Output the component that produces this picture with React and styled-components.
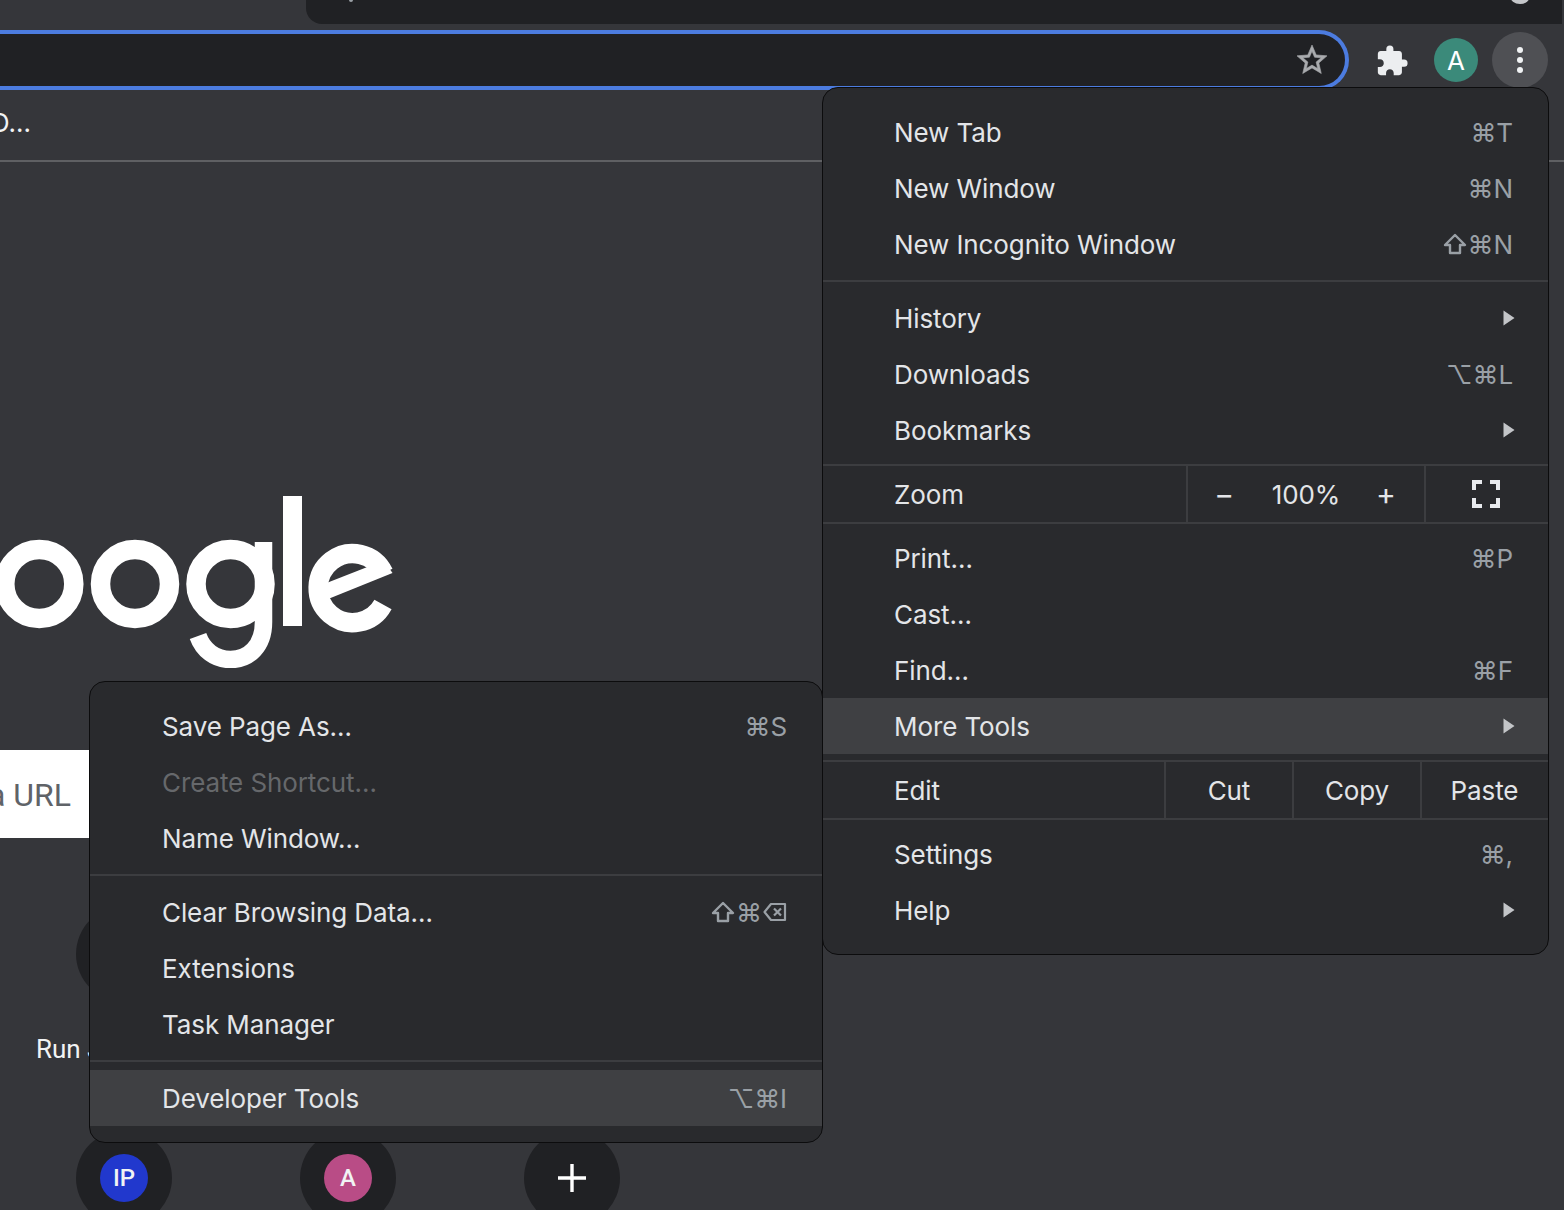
import React from "react";
import styled, { createGlobalStyle } from "styled-components";
import { MdExtension } from "react-icons/md";

const Global = createGlobalStyle`
  html, body { margin: 0; padding: 0; background: #35363a; }
  body { width: 1564px; height: 1210px; overflow: hidden; font-family: "Inter", "DejaVu Sans", sans-serif; }
`;

const Page = styled.div`
  position: relative;
  width: 1564px;
  height: 1210px;
  overflow: hidden;
  background: #35363a;
  display: flex;
  flex-direction: column;
`;

const TabStrip = styled.div`
  height: 24px;
  padding-left: 306px;
  flex: none;
`;
const ActiveTab = styled.div`
  height: 24px;
  margin-right: 2px;
  background: #202124;
  border-bottom-left-radius: 16px;
  position: relative;
  overflow: hidden;
`;
const TabDot = styled.span`
  position: absolute;
  top: -3px;
  left: 43px;
  width: 4px;
  height: 5px;
  border-radius: 2px;
  background: #9aa0a6;
`;
const TabClose = styled.span`
  position: absolute;
  top: -12px;
  right: 32px;
  width: 20px;
  height: 16px;
  border-radius: 50%;
  background: #c4c6c9;
`;

const Toolbar = styled.div`
  height: 64px;
  flex: none;
  display: flex;
  align-items: flex-start;
`;
const Omnibox = styled.div`
  width: 1349px;
  height: 60px;
  margin-top: 6px;
  box-sizing: border-box;
  background: #202124;
  border: 4px solid #4c7ce0;
  border-left: none;
  border-radius: 0 30px 30px 0;
  display: flex;
  align-items: center;
  justify-content: flex-end;
  padding-right: 15px;
  color: #a9abae;
  flex: none;
`;
const ExtButton = styled.div`
  width: 36px;
  height: 33px;
  margin-left: 25px;
  margin-top: 20px;
  color: #eceef0;
  display: flex;
  justify-content: center;
`;
const Avatar = styled.div`
  width: 44px;
  height: 44px;
  margin-left: 24px;
  margin-top: 14px;
  border-radius: 50%;
  background: #3b8a7a;
  color: #fff;
  font-size: 26px;
  display: flex;
  align-items: center;
  justify-content: center;
`;
const MoreButton = styled.div`
  width: 56px;
  height: 56px;
  margin-left: 14px;
  margin-top: 8px;
  border-radius: 50%;
  background: #4f5054;
  display: flex;
  flex-direction: column;
  align-items: center;
  justify-content: center;
  gap: 4px;
`;
const Dot = styled.span`
  width: 6px;
  height: 6px;
  border-radius: 50%;
  background: #f1f3f4;
`;

const BookmarkBar = styled.div`
  height: 74px;
  flex: none;
  box-sizing: border-box;
  border-bottom: 2px solid #5f6063;
  display: flex;
  align-items: center;
`;
const BookmarkClip = styled.div`
  width: 31px;
  overflow: hidden;
  display: flex;
  justify-content: flex-end;
  color: #f1f3f4;
  font-size: 26px;
  white-space: nowrap;
  padding-bottom: 4px;
`;

const Main = styled.main`
  flex: 1;
  display: flex;
  flex-direction: column;
`;
const Logo = styled.svg`
  display: block;
  margin-top: 334px;
  flex: none;
`;
const SearchBox = styled.div`
  width: 500px;
  height: 88px;
  margin-top: 82px;
  background: #fff;
  flex: none;
  display: flex;
  align-items: center;
  overflow: hidden;
`;
const SearchHint = styled.div`
  width: 71px;
  overflow: hidden;
  display: flex;
  justify-content: flex-end;
  white-space: nowrap;
  font-family: "Roboto", sans-serif;
  font-size: 32px;
  color: #5f6368;
  flex: none;
  padding-top: 2px;
`;
const Grid = styled.div`
  margin-top: 68px;
  margin-left: 12px;
  display: grid;
  grid-template-columns: repeat(3, 224px);
  grid-auto-rows: 224px;
`;
const Tile = styled.div`
  display: flex;
  flex-direction: column;
  align-items: center;
`;
const TileCircle = styled.div`
  width: 96px;
  height: 96px;
  border-radius: 50%;
  background: #202124;
  display: flex;
  align-items: center;
  justify-content: center;
  flex: none;
`;
const TileIcon = styled.div`
  width: 48px;
  height: 48px;
  border-radius: 50%;
  background: ${(p) => p.$bg};
  color: #f1f3f4;
  font-family: "Roboto", sans-serif;
  font-size: 24px;
  font-weight: 500;
  display: flex;
  align-items: center;
  justify-content: center;
`;
const TileLabel = styled.div`
  margin-top: 32px;
  width: 176px;
  overflow: hidden;
  color: #f1f3f4;
  font-family: "Roboto", sans-serif;
  font-size: 26px;
  white-space: nowrap;
`;

const Menu = styled.div`
  position: absolute;
  left: ${(p) => p.$left}px;
  top: ${(p) => p.$top}px;
  width: ${(p) => p.$width}px;
  box-sizing: border-box;
  padding: 16px 0;
  background: #292a2d;
  border: 1px solid #0c0c0d;
  border-radius: 16px;
  color: #e3e5e8;
  font-size: 26px;
  letter-spacing: -0.1px;
  --row-left: ${(p) => p.$indent}px;
`;
const Row = styled.div`
  height: 56px;
  display: flex;
  align-items: center;
  justify-content: space-between;
  padding: 0 36px 0 var(--row-left);
  background: ${(p) => (p.$active ? "#3f4043" : "transparent")};
  color: ${(p) => (p.$disabled ? "#66686b" : "inherit")};
`;
const Shortcut = styled.span`
  color: #9aa0a6;
  display: inline-flex;
  align-items: center;
  gap: 1px;
  margin-right: -1px;
`;
const Sep = styled.div`
  height: 2px;
  background: #3c3d40;
  margin-top: ${(p) => p.$before}px;
  margin-bottom: ${(p) => p.$after}px;
`;
const ControlRow = styled.div`
  height: 56px;
  display: flex;
  align-items: stretch;
  padding: 0 1px 0 var(--row-left);
`;
const ControlLabel = styled.div`
  flex: 1;
  display: flex;
  align-items: center;
`;
const ControlCell = styled.div`
  width: ${(p) => p.$width}px;
  box-sizing: border-box;
  border-left: 2px solid #3c3d40;
  display: flex;
  align-items: center;
  justify-content: center;
  flex: none;
`;
const ZoomValue = styled.span`
  width: 140px;
  text-align: center;
`;
const ZoomSign = styled.span`
  width: 24px;
  padding-right: ${(p) => p.$trim || 0}px;
  box-sizing: border-box;
  text-align: center;
  font-size: 30px;
  line-height: 30px;
`;
const ArrowMark = styled.svg`
  margin-right: -3px;
`;
const FullscreenMark = styled.svg`
  margin-right: 2px;
`;

const StarIcon = () => (
  <svg width="36" height="36" viewBox="0 0 24 24" fill="currentColor" stroke="currentColor" strokeWidth="0.4">
    <path d="M22 9.24l-7.19-.62L12 2 9.19 8.63 2 9.24l5.46 4.73L5.82 21 12 17.27 18.18 21l-1.63-7.03L22 9.24zM12 15.4l-3.76 2.27 1-4.28-3.32-2.88 4.38-.38L12 6.1l1.71 4.04 4.38.38-3.32 2.88 1 4.28L12 15.4z" />
  </svg>
);
const Arrow = () => (
  <ArrowMark width="12" height="16" viewBox="0 0 12 16"><path d="M0.5 0.5 11.5 8 0.5 15.5Z" fill="#c3c5c8" /></ArrowMark>
);
const ShiftIcon = () => (
  <svg width="24" height="22" viewBox="0 0 24 22" fill="none" stroke="#9aa0a6" strokeWidth="2.4" strokeLinejoin="round">
    <path d="M12 2 22 12H17V20H7V12H2Z" />
  </svg>
);
const DeleteIcon = () => (
  <svg width="24" height="20" viewBox="0 0 24 20" fill="none" stroke="#9aa0a6" strokeWidth="2.2" strokeLinejoin="round">
    <path d="M8 2H22V18H8L1.5 10Z" />
    <path d="M11 6.5 18 13.5M18 6.5 11 13.5" />
  </svg>
);
const FullscreenIcon = () => (
  <FullscreenMark width="28" height="28" viewBox="0 0 28 28" fill="none" stroke="#e8eaed" strokeWidth="4">
    <path d="M2 10V2H10M18 2H26V10M26 18V26H18M10 26H2V18" />
  </FullscreenMark>
);

const MenuRow = ({ label, keys, arrow, ...rest }) => (
  <Row {...rest}>
    <span>{label}</span>
    {keys && <Shortcut>{keys}</Shortcut>}
    {arrow && <Arrow />}
  </Row>
);

export default function App() {
  return (
    <Page>
      <Global />
      <TabStrip>
        <ActiveTab>
          <TabDot />
          <TabClose />
        </ActiveTab>
      </TabStrip>
      <Toolbar>
        <Omnibox>
          <StarIcon />
        </Omnibox>
        <ExtButton><MdExtension size={34} /></ExtButton>
        <Avatar>A</Avatar>
        <MoreButton><Dot /><Dot /><Dot /></MoreButton>
      </Toolbar>
      <BookmarkBar>
        <BookmarkClip>DO…</BookmarkClip>
      </BookmarkBar>
      <Main>
        <Logo width="400" height="172" viewBox="0 496 400 172" fill="none" stroke="#fff" strokeWidth="19.5">
          <circle cx="39.3" cy="584" r="34.5" />
          <circle cx="135" cy="584" r="34.5" />
          <circle cx="230.5" cy="584" r="34.5" />
          <path strokeWidth="17.5" d="M263.5 542V622C263.5 646 249 659.5 230.5 659.5 215 659.5 203 650 198 636" />
          <rect x="283" y="496" width="19" height="130" fill="#fff" stroke="none" />
          <path d="M383 604.5A34.500 34.500 0 1 1 383.700 573" />
          <polygon points="324,584 368,566.700 385,562 392.500,573 325,600.200" fill="#fff" stroke="none" />
        </Logo>
        <SearchBox>
          <SearchHint>Search Google or type a URL</SearchHint>
        </SearchBox>
        <Grid>
          <Tile>
            <TileCircle />
            <TileLabel>Run JavaScript</TileLabel>
          </Tile>
          <Tile />
          <Tile />
          <Tile>
            <TileCircle><TileIcon $bg="#2138cd">IP</TileIcon></TileCircle>
          </Tile>
          <Tile>
            <TileCircle><TileIcon $bg="#b94c86">A</TileIcon></TileCircle>
          </Tile>
          <Tile>
            <TileCircle>
              <svg width="28" height="28" viewBox="0 0 28 28" fill="none" stroke="#fff" strokeWidth="3.4"><path d="M14 0V28M0 14H28" /></svg>
            </TileCircle>
          </Tile>
        </Grid>
      </Main>

      <Menu $left={822} $top={87} $width={727} $indent={71}>
        <MenuRow label="New Tab" keys="⌘T" />
        <MenuRow label="New Window" keys="⌘N" />
        <MenuRow label="New Incognito Window" keys={<><ShiftIcon />⌘N</>} />
        <Sep $before={8} $after={8} />
        <MenuRow label="History" arrow />
        <MenuRow label="Downloads" keys="⌥⌘L" />
        <MenuRow label="Bookmarks" arrow />
        <Sep $before={6} $after={0} />
        <ControlRow>
          <ControlLabel>Zoom</ControlLabel>
          <ControlCell $width={238}>
            <ZoomSign>−</ZoomSign>
            <ZoomValue>100%</ZoomValue>
            <ZoomSign $trim={12}>+</ZoomSign>
          </ControlCell>
          <ControlCell $width={123}><FullscreenIcon /></ControlCell>
        </ControlRow>
        <Sep $before={0} $after={6} />
        <MenuRow label="Print…" keys="⌘P" />
        <MenuRow label="Cast…" />
        <MenuRow label="Find…" keys="⌘F" />
        <MenuRow label="More Tools" arrow $active />
        <Sep $before={6} $after={0} />
        <ControlRow>
          <ControlLabel>Edit</ControlLabel>
          <ControlCell $width={128}>Cut</ControlCell>
          <ControlCell $width={128}>Copy</ControlCell>
          <ControlCell $width={127}>Paste</ControlCell>
        </ControlRow>
        <Sep $before={0} $after={6} />
        <MenuRow label="Settings" keys="⌘," />
        <MenuRow label="Help" arrow />
      </Menu>

      <Menu $left={89} $top={681} $width={734} $indent={72}>
        <MenuRow label="Save Page As…" keys="⌘S" />
        <MenuRow label="Create Shortcut…" $disabled />
        <MenuRow label="Name Window…" />
        <Sep $before={8} $after={8} />
        <MenuRow label="Clear Browsing Data…" keys={<><ShiftIcon />⌘<DeleteIcon /></>} />
        <MenuRow label="Extensions" />
        <MenuRow label="Task Manager" />
        <Sep $before={8} $after={8} />
        <MenuRow label="Developer Tools" keys="⌥⌘I" $active />
      </Menu>
    </Page>
  );
}
